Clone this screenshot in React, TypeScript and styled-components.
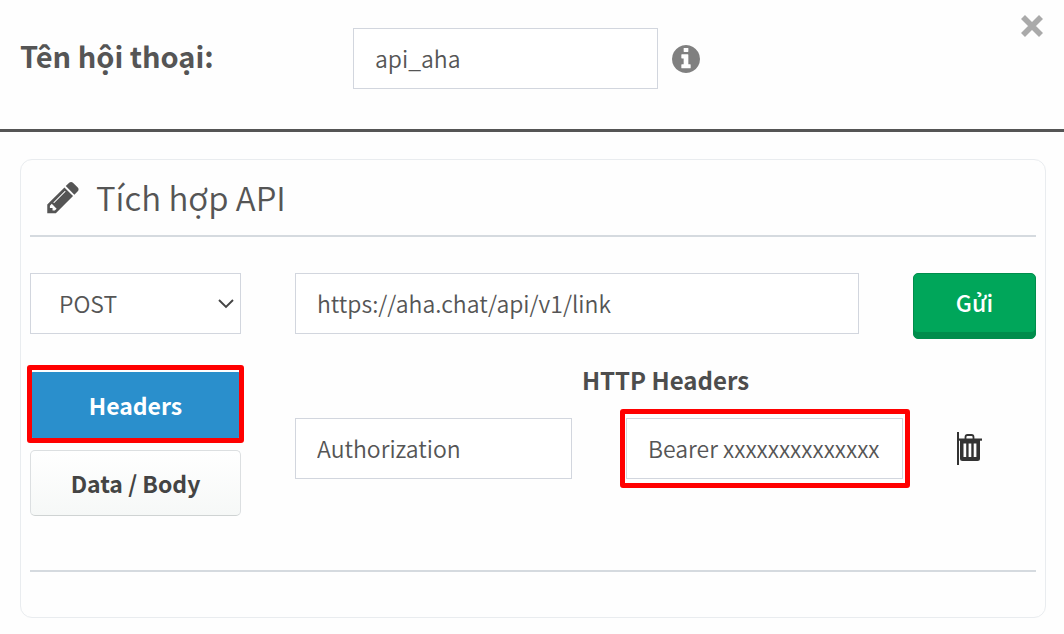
import React from "react";
import styled, { createGlobalStyle, css } from "styled-components";

const GlobalStyle = createGlobalStyle`
  *, *::before, *::after { box-sizing: border-box; }
  body {
    margin: 0;
    background: #fefefe;
    color: #555;
    font-family: "Noto Sans CJK JP", "Noto Sans", sans-serif;
    font-size: 23px;
    font-weight: 350;
    line-height: 32px;
  }
  button, input, select { font: inherit; color: inherit; }
`;

const Header = styled.header`
  display: grid;
  grid-template-columns: 305px 305px 28px 1fr;
  column-gap: 14px;
  align-items: start;
  padding: 28px 20px 40px;
  border-bottom: 3px solid #555;
`;

const NameLabel = styled.label`
  padding-top: 11px;
  font-size: 29px;
  font-weight: 700;
`;

const NameCell = styled.div`
  padding-left: 14px;
  margin-right: -14px;
`;

const TextField = styled.input`
  display: block;
  width: 100%;
  height: 61px;
  padding: 0 21px 2px;
  border: 1px solid #d2d6de;
  border-radius: 0;
  background: #fff;
  outline: none;
`;

const IconButton = styled.button`
  display: block;
  padding: 0;
  border: 0;
  background: none;
  cursor: pointer;
  svg { display: block; }
`;

const InfoButton = styled(IconButton)`
  margin: 17px 0 0 14px;
  color: #808080;
`;

const CloseButton = styled(IconButton)`
  justify-self: end;
  margin-top: -14px;
  color: #aaa;
`;

const Card = styled.section`
  margin: 27px 18px 16px 20px;
  padding: 0 9px 45px;
  border: 1px solid #e9ecef;
  border-radius: 12px;
`;

const CardTitle = styled.h2`
  display: flex;
  align-items: center;
  gap: 15px;
  height: 77px;
  margin: 0 0 36px;
  padding: 0 14px 2px;
  border-bottom: 2px solid #d5dadf;
  font-size: 33px;
  line-height: 40px;
  font-weight: 350;
`;

const RequestRow = styled.div`
  display: grid;
  grid-template-columns: 211px 1fr 123px;
  column-gap: 54px;
  align-items: start;
`;

const SelectWrap = styled.div`
  position: relative;
  svg {
    position: absolute;
    top: 24px;
    right: 6px;
    pointer-events: none;
  }
`;

const MethodSelect = styled.select`
  display: block;
  width: 100%;
  height: 61px;
  padding: 0 28px 2px;
  border: 1px solid #d2d6de;
  border-radius: 0;
  background: #fff;
  appearance: none;
  outline: none;
`;

const SendButton = styled.button`
  height: 66px;
  padding: 0 0 8px;
  border: 1px solid #008d4c;
  border-radius: 5px;
  background: #00a65a;
  box-shadow: inset 0 -6px 0 #008d4c;
  color: #fff;
  font-weight: 500;
  cursor: pointer;
`;

const Content = styled.div`
  display: grid;
  grid-template-columns: 211px 1fr;
  column-gap: 54px;
  margin-top: 33px;
  padding-bottom: 54px;
  border-bottom: 2px solid #d5dadf;
`;

const Tabs = styled.nav`
  display: flex;
  flex-direction: column;
  gap: 12px;
`;

const highlight = css`
  position: relative;
  &::after {
    content: "";
    position: absolute;
    border: 5px solid #f00;
    border-radius: 3px;
    pointer-events: none;
  }
`;

const TabButton = styled.button<{ $active?: boolean }>`
  height: 66px;
  padding: 0;
  border: 1px solid #dcdfe1;
  border-bottom-color: #cfd3d3;
  border-radius: 5px;
  background: linear-gradient(#fff, #f6f8f7);
  color: #444;
  font-weight: 700;
  cursor: pointer;
  ${(p) =>
    p.$active &&
    css`
      ${highlight}
      border: 0;
      border-radius: 3px;
      background: #2a8fcc;
      color: #fff;
      &::after { inset: -7px -3px -5px; }
    `}
`;

const HeadersTitle = styled.h3`
  margin: -8px 0 22px;
  font-size: 24px;
  line-height: 32px;
  font-weight: 700;
  text-align: center;
  color: #4d4d4d;
`;

const HeaderRow = styled.div`
  display: grid;
  grid-template-columns: 1fr 1fr 79px;
  column-gap: 54px;
  align-items: center;
`;

const HighlightedField = styled.div`
  ${highlight}
  &::after { inset: -9px -7px -9px -6px; }
`;

const DeleteButton = styled(IconButton)`
  color: #333;
`;

const PencilIcon = () => (
  <svg width="37" height="37" viewBox="-30 -40 1792 1792" fill="currentColor" aria-hidden="true">
    <path d="M491 1536l91-91-235-235-91 91v107h128v128h107zm523-928q0-22-22-22-10 0-17 7l-542 542q-7 7-7 17 0 22 22 22 10 0 17-7l542-542q7-7 7-17zm-54-192l416 416-832 832h-416v-416zm683 96q0 53-37 90l-166 166-416-416 166-165q36-38 90-38 53 0 91 38l235 234q37 39 37 91z" />
  </svg>
);

const InfoIcon = () => (
  <svg width="28" height="28" viewBox="128 128 1536 1536" fill="currentColor" aria-hidden="true">
    <path d="M1152 1376v-160q0-14-9-23t-23-9h-96v-512q0-14-9-23t-23-9h-320q-14 0-23 9t-9 23v160q0 14 9 23t23 9h96v320h-96q-14 0-23 9t-9 23v160q0 14 9 23t23 9h448q14 0 23-9t9-23zm-128-896v-160q0-14-9-23t-23-9h-192q-14 0-23 9t-9 23v160q0 14 9 23t23 9h192q14 0 23-9t9-23zm640 416q0 209-103 385.5t-279.5 279.5-385.5 103-385.5-103-279.5-279.5-103-385.5 103-385.5 279.5-279.5 385.5-103 385.5 103 279.5 279.5 103 385.5z" />
  </svg>
);

const CloseIcon = () => (
  <svg width="24" height="24" viewBox="0 0 24 24" stroke="currentColor" strokeWidth="5.6" fill="none" aria-hidden="true">
    <path d="M3 3L21 21M21 3L3 21" />
  </svg>
);

const ChevronIcon = () => (
  <svg width="18" height="14" viewBox="0 0 18 14" stroke="#444" strokeWidth="1.9" fill="none" aria-hidden="true">
    <path d="M2 3L9 10L16 3" />
  </svg>
);

const TrashIcon = () => (
  <svg width="26" height="33" viewBox="0 0 26 33" fill="currentColor" aria-hidden="true">
    <path d="M0 0h2v33H0z" />
    <path d="M2 6.500h23v2.200H2z" />
    <path d="M8.500 7V5Q8.500 3 10.500 3H14.500Q16.500 3 16.500 5V7" fill="none" stroke="currentColor" strokeWidth="1.8" />
    <path
      fillRule="evenodd"
      d="M3 8h20v18.500q0 2.500-2.500 2.500h-15q-2.500 0-2.500-2.500zM6.500 11.500v13.500h2.700v-13.500zM11.600 11.500v13.500h2.700v-13.500zM16.700 11.500v13.500h2.700v-13.500z"
    />
  </svg>
);

export default function App() {
  return (
    <>
      <GlobalStyle />
      <Header>
        <NameLabel htmlFor="dialog-name">Tên hội thoại:</NameLabel>
        <NameCell>
          <TextField id="dialog-name" defaultValue="api_aha" />
        </NameCell>
        <InfoButton type="button" aria-label="Thông tin">
          <InfoIcon />
        </InfoButton>
        <CloseButton type="button" aria-label="Đóng">
          <CloseIcon />
        </CloseButton>
      </Header>
      <Card>
        <CardTitle>
          <PencilIcon />
          Tích hợp API
        </CardTitle>
        <RequestRow>
          <SelectWrap>
            <MethodSelect aria-label="Phương thức" defaultValue="POST">
              <option>GET</option>
              <option>POST</option>
            </MethodSelect>
            <ChevronIcon />
          </SelectWrap>
          <TextField aria-label="URL" defaultValue="https://aha.chat/api/v1/link" />
          <SendButton type="button">Gửi</SendButton>
        </RequestRow>
        <Content>
          <Tabs>
            <TabButton type="button" $active>
              Headers
            </TabButton>
            <TabButton type="button">Data / Body</TabButton>
          </Tabs>
          <div>
            <HeadersTitle>HTTP Headers</HeadersTitle>
            <HeaderRow>
              <TextField aria-label="Key" defaultValue="Authorization" />
              <HighlightedField>
                <TextField aria-label="Value" defaultValue="Bearer xxxxxxxxxxxxxx" />
              </HighlightedField>
              <DeleteButton type="button" aria-label="Xóa">
                <TrashIcon />
              </DeleteButton>
            </HeaderRow>
          </div>
        </Content>
      </Card>
    </>
  );
}
